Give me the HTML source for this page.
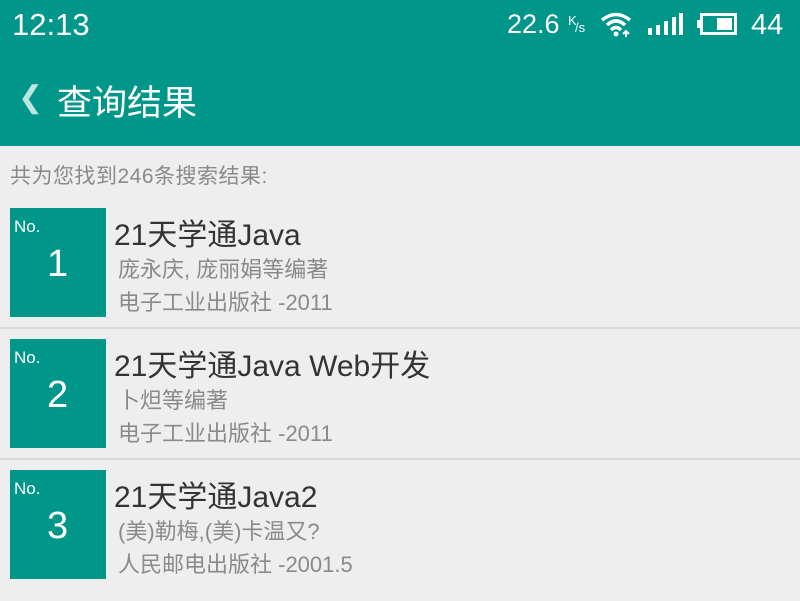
<!DOCTYPE html>
<html><head><meta charset="utf-8"><style>
*{margin:0;padding:0;box-sizing:border-box}
body{width:800px;height:559px;overflow:hidden;background:#eeeeee;font-family:"Liberation Sans","Noto Sans CJK SC",sans-serif;position:relative}
.hdr{position:absolute;left:0;top:0;width:800px;height:146px;background:#00968a;color:#fff}
.t{position:absolute;white-space:nowrap}
.item{position:absolute;left:0;width:800px;height:131px}
.box{position:absolute;left:10px;top:0;width:96px;height:109px;background:#00968a;color:#fff}
.sep{position:absolute;left:0;width:800px;height:2px;background:#d8d8d8}
.ti{left:114px;top:2px;font-size:30px;color:#333}
.s1{left:118px;top:44px;font-size:22px;color:#8a8a8a}
.s2{left:118px;top:77px;font-size:22px;color:#8a8a8a}
</style></head><body>
<div class="hdr">
<div class="t" style="left:12px;top:7px;font-size:31px">12:13</div>
<div class="t" style="left:507px;top:9px;font-size:27px">22.6</div>
<div class="t" style="left:568px;top:13px;font-size:13px">K</div>
<div class="t" style="left:575px;top:20px;font-size:13px">/s</div>
<svg style="position:absolute;left:600px;top:12px" width="34" height="26" viewBox="0 0 34 26"><path d="M2 8 Q16 -3 30 8" stroke="#fff" stroke-width="3.5" fill="none"/><path d="M7 13 Q16 5 25 13" stroke="#fff" stroke-width="3.5" fill="none"/><path d="M11 18 Q16 13 21 18" stroke="#fff" stroke-width="3.5" fill="none"/><circle cx="16" cy="22" r="2.5" fill="#fff"/><path d="M26 25 v-5 M23 22 l3 -3 3 3" stroke="#fff" stroke-width="2" fill="none"/></svg>
<svg style="position:absolute;left:646px;top:12px" width="38" height="24"><rect x="2" y="16" width="4" height="7" fill="#fff"/><rect x="10" y="13" width="4" height="10" fill="#fff"/><rect x="18" y="9" width="4" height="14" fill="#fff"/><rect x="26" y="5" width="4" height="18" fill="#fff"/><rect x="33" y="1" width="4" height="22" fill="#fff"/></svg>
<svg style="position:absolute;left:696px;top:12px" width="44" height="24"><rect x="1" y="8" width="3" height="8" fill="#fff"/><rect x="5.5" y="2.5" width="34" height="19" stroke="#fff" stroke-width="3" fill="none"/><rect x="21" y="6" width="15" height="12" fill="#fff"/></svg>
<div class="t" style="left:751px;top:9px;font-size:29px">44</div>
<div class="t" style="left:18px;top:80px;font-size:30px;color:#bde6e2">❮</div>
<div class="t" style="left:57px;top:75px;font-size:35px">查询结果</div>
</div>
<div class="t" style="left:10px;top:160px;font-size:21px;color:#8a8a8a;letter-spacing:0.5px">共为您找到246条搜索结果:</div>

<div class="item" style="top:208px">
<div class="box"><div class="t" style="left:4px;top:9px;font-size:17px">No.</div><div class="t" style="left:37px;top:35px;font-size:38px">1</div></div>
<div class="t ti">21天学通Java</div>
<div class="t s1">庞永庆, 庞丽娟等编著</div>
<div class="t s2">电子工业出版社 -2011</div>
</div>
<div class="sep" style="top:327px"></div>
<div class="item" style="top:339px">
<div class="box"><div class="t" style="left:4px;top:9px;font-size:17px">No.</div><div class="t" style="left:37px;top:35px;font-size:38px">2</div></div>
<div class="t ti">21天学通Java Web开发</div>
<div class="t s1">卜炟等编著</div>
<div class="t s2">电子工业出版社 -2011</div>
</div>
<div class="sep" style="top:458px"></div>
<div class="item" style="top:470px">
<div class="box"><div class="t" style="left:4px;top:9px;font-size:17px">No.</div><div class="t" style="left:37px;top:35px;font-size:38px">3</div></div>
<div class="t ti">21天学通Java2</div>
<div class="t s1">(美)勒梅,(美)卡温又?</div>
<div class="t s2">人民邮电出版社 -2001.5</div>
</div>
</body></html>
